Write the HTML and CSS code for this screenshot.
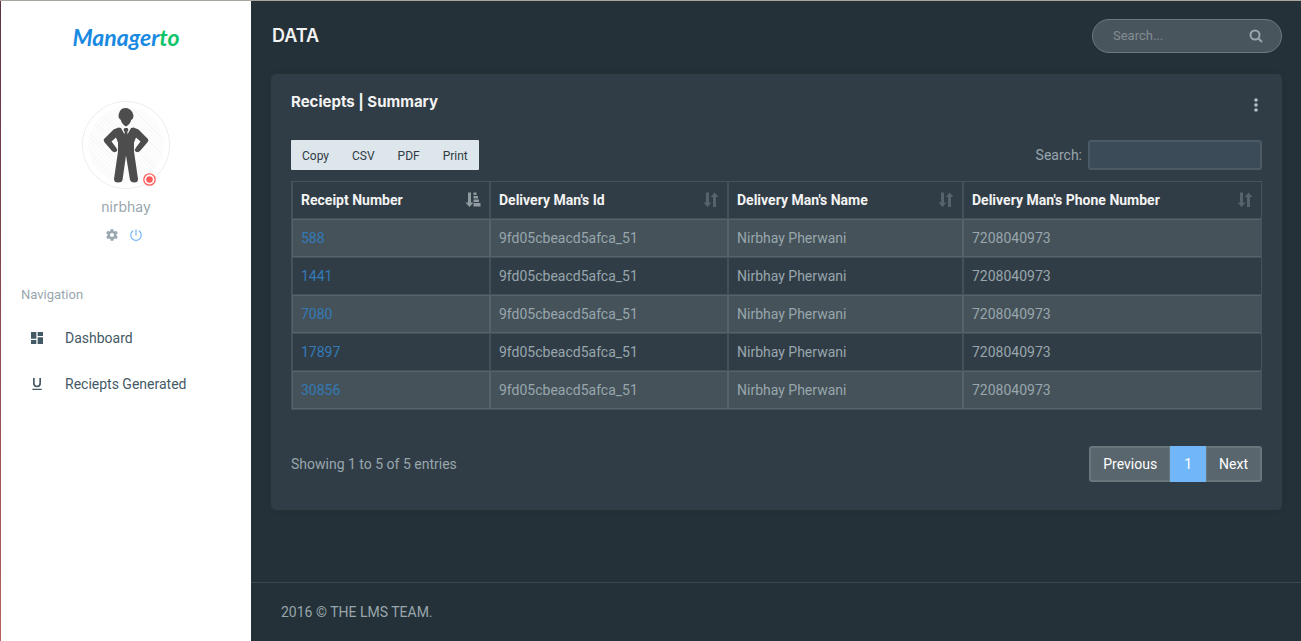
FILE: index.html
```html
<!DOCTYPE html>
<html lang="en">
<head>
<meta charset="utf-8">
<meta name="viewport" content="width=device-width, initial-scale=1">
<title>Managerto - Data</title>
<link rel="stylesheet" href="styles.css">
</head>
<body>
<svg class="sprite" aria-hidden="true">
  <symbol id="sort" viewBox="0 0 16 16">
    <path d="M3 0.500h3v10h2.500L4.500 15 .500 10.500H3zM10 15V5H7.800L11.500.500l4 4.500H13v10z"/>
  </symbol>
  <symbol id="sort-asc" viewBox="0 0 16 16">
    <path d="M3 0.500h3v10h2.500L4.500 15 .500 10.500H3zM8.500.500h3V3h-3zM8.500 4H13v2.500H8.500zM8.500 7.500h5.500V10H8.500zM8.500 11H15.500v3.500H8.500z"/>
  </symbol>
</svg>
<div class="page">
  <aside class="sidebar">
    <a class="logo" href="#">Manager<span class="logo-end">to</span></a>
    <section class="user">
      <div class="avatar">
        <svg class="man" viewBox="0 0 88 88" aria-hidden="true">
          <path d="M37.500 11q1.500-4 6-4t7 4.500l1 3-.5 3-1.800 1.500q-1 4-5.200 6.500-4.200-2.500-5.200-6.500L36.800 17l-.3-3z"/>
          <path d="M36.500 26.500 39 27l5 9 5-9 2.500-.5 5 2L66 38q.8 1.500-.3 3L58 50q-2 2-4.500.500-1.500-2 .5-4l4.500-6L54 36.500l-2 5v9L56 78q0 3.500-3.500 3.500T48 79l-4-24.500L40.500 79q-.5 2.500-4.500 2.500T32 78l4-27.500v-9l-2-5-4.500 4 4.500 6q2 2 .5 4-2.500 1.500-4.500-.5l-7.700-9q-1.100-1.500-.3-3l9.500-9.500z"/>
          <path d="m42.500 27h3l1 2-1.200 2 .7 4-2 3-2-3 .7-4-1.200-2z"/>
        </svg>
        <svg class="status" viewBox="0 0 13 13" aria-hidden="true"><circle class="ring" cx="6.500" cy="6.500" r="5.700"/><circle class="dot" cx="6.500" cy="6.500" r="3.300"/></svg>
      </div>
      <h2 class="user-name">nirbhay</h2>
      <div class="user-links">
        <a href="#" aria-label="Settings"><svg class="gear" viewBox="0 0 24 24"><path d="M19.400 13a8 8 0 0 0 0-2l2.100-1.700c.2-.1.300-.4.100-.6l-2-3.500c-.1-.2-.4-.3-.6-.2l-2.500 1a7 7 0 0 0-1.700-1l-.4-2.600a.5.5 0 0 0-.5-.4h-4c-.3 0-.5.200-.5.400L9 5a7 7 0 0 0-1.700 1L4.900 5c-.2-.1-.5 0-.6.200l-2 3.500c-.1.200-.1.500.1.600L4.600 11a8 8 0 0 0 0 2l-2.100 1.700c-.2.100-.3.400-.1.600l2 3.500c.1.200.4.300.6.200l2.500-1a7 7 0 0 0 1.700 1l.3 2.600c0 .2.200.4.500.4h4c.3 0 .5-.2.500-.4l.4-2.600a7 7 0 0 0 1.700-1l2.400 1c.2.1.5 0 .6-.2l2-3.500c.1-.2.100-.5-.1-.6zM12 15.500a3.500 3.500 0 1 1 0-7 3.500 3.500 0 0 1 0 7z"/></svg></a>
        <a href="#" aria-label="Log out"><svg class="power" viewBox="0 0 24 24"><path d="M12 3v9M17.500 5a9 9 0 1 1-11 0"/></svg></a>
      </div>
    </section>
    <nav class="nav">
      <p class="nav-title">Navigation</p>
      <a class="nav-link" href="#"><svg viewBox="0 0 24 24"><path d="M3 13h8V3H3zm0 8h8v-6H3zm10 0h8V11h-8zm0-18v6h8V3z"/></svg>Dashboard</a>
      <a class="nav-link" href="#"><svg viewBox="0 0 24 24"><path d="M12 17a6 6 0 0 0 6-6V3h-2.500v8a3.500 3.500 0 0 1-7 0V3H6v8a6 6 0 0 0 6 6zm-7 2v2h14v-2z"/></svg>Reciepts Generated</a>
    </nav>
  </aside>
  <div class="main">
    <header class="topbar">
      <h1 class="page-title">DATA</h1>
      <form class="site-search" role="search">
        <input type="text" placeholder="Search..." aria-label="Search site">
        <button type="button" aria-label="Search"><svg viewBox="0 0 14 14"><circle cx="6" cy="6" r="4.500"/><path d="m9.500 9.500 3.500 3.500"/></svg></button>
      </form>
    </header>
    <main class="card">
      <div class="card-head">
        <h2 class="card-title">Reciepts | Summary</h2>
        <button class="more" type="button" aria-label="More actions"><svg viewBox="0 0 4 14"><circle cx="2" cy="2" r="1.800"/><circle cx="2" cy="7" r="1.800"/><circle cx="2" cy="12" r="1.800"/></svg></button>
      </div>
      <div class="tools">
        <div class="exports">
          <button type="button">Copy</button><button type="button">CSV</button><button type="button">PDF</button><button type="button">Print</button>
        </div>
        <div class="filter"><label for="filter">Search:</label><input id="filter" type="text"></div>
      </div>
      <table class="data">
        <colgroup><col class="col-number"><col class="col-id"><col class="col-name"><col></colgroup>
        <thead>
          <tr>
            <th class="sorted"><div class="th-in">Receipt Number<svg><use href="#sort-asc"/></svg></div></th>
            <th><div class="th-in">Delivery Man's Id<svg><use href="#sort"/></svg></div></th>
            <th><div class="th-in">Delivery Man's Name<svg><use href="#sort"/></svg></div></th>
            <th><div class="th-in">Delivery Man's Phone Number<svg><use href="#sort"/></svg></div></th>
          </tr>
        </thead>
        <tbody>
          <tr><td><a href="#">588</a></td><td>9fd05cbeacd5afca_51</td><td>Nirbhay Pherwani</td><td>7208040973</td></tr>
          <tr><td><a href="#">1441</a></td><td>9fd05cbeacd5afca_51</td><td>Nirbhay Pherwani</td><td>7208040973</td></tr>
          <tr><td><a href="#">7080</a></td><td>9fd05cbeacd5afca_51</td><td>Nirbhay Pherwani</td><td>7208040973</td></tr>
          <tr><td><a href="#">17897</a></td><td>9fd05cbeacd5afca_51</td><td>Nirbhay Pherwani</td><td>7208040973</td></tr>
          <tr><td><a href="#">30856</a></td><td>9fd05cbeacd5afca_51</td><td>Nirbhay Pherwani</td><td>7208040973</td></tr>
        </tbody>
      </table>
      <div class="table-foot">
        <span>Showing 1 to 5 of 5 entries</span>
        <nav class="pages" aria-label="Pages"><a href="#">Previous</a><a class="current" href="#">1</a><a href="#">Next</a></nav>
      </div>
    </main>
    <footer class="footer">2016 © THE LMS TEAM.</footer>
  </div>
</div>
</body>
</html>
```
FILE: styles.css
```css
* { box-sizing: border-box; }

body {
  margin: 0;
  background: #253138;
  color: #98a6ad;
  font: 14px/20px Roboto, sans-serif;
}

h1, h2, p { margin: 0; }
a { color: inherit; text-decoration: none; }
button, input { font: inherit; color: inherit; }
button { padding: 0; border: 0; background: none; cursor: pointer; }
.sprite { display: none; }

.page {
  display: flex;
  min-height: 100vh;
  border-top: 1px solid #aaa59f;
}

/* Sidebar */
.sidebar {
  flex: none;
  width: 251px;
  border-left: 1px solid;
  border-image: linear-gradient(#5f3344, #b5605e) 1;
  background: #fff;
}

.logo {
  display: block;
  height: 72px;
  color: #188ae2;
  font: italic 700 23px/72px Lato, sans-serif;
  text-align: center;
}
.logo-end { color: #10c469; }

.user {
  display: flex;
  flex-direction: column;
  align-items: center;
  padding-top: 28px;
}
.avatar {
  position: relative;
  width: 88px;
  height: 88px;
  border: 1px solid #e6ebed;
  border-radius: 50%;
  padding: 5px;
  background: repeating-linear-gradient(45deg, #f8f8f8 0 1px, #fdfdfd 1px 3px) content-box;
}
.avatar::before {
  content: "";
  position: absolute;
  inset: 0;
  border: 5px solid #fff;
  border-radius: 50%;
}
.man {
  position: absolute;
  inset: -1px;
  width: 88px;
  height: 88px;
  fill: #4d4d4d;
}
.status {
  position: absolute;
  right: 13px;
  bottom: 2px;
  width: 13px;
  height: 13px;
}
.ring {
  fill: #fff;
  stroke: #ff5b5b;
  stroke-width: 1.300;
}
.dot { fill: #ff5b5b; }
.user-name {
  margin-top: 8px;
  font: 400 14px/20px Inter, sans-serif;
}
.user-links {
  display: flex;
  gap: 10px;
  margin-top: 11px;
  padding-right: 5px;
}
.user-links svg {
  display: block;
  width: 14px;
  height: 14px;
}
.gear { fill: #98a6ad; }
.power {
  fill: none;
  stroke: #71b6f9;
  stroke-width: 2;
  stroke-linecap: round;
}

.nav { padding-top: 43px; }
.nav-title {
  padding: 0 20px;
  margin-bottom: 10px;
  font-size: 13px;
}
.nav-link {
  display: flex;
  align-items: center;
  gap: 20px;
  padding: 13px 28px;
  color: #435966;
}
.nav-link svg {
  width: 16px;
  height: 16px;
  fill: #435966;
}

/* Content */
.main {
  flex: 1;
  min-width: 0;
  display: flex;
  flex-direction: column;
}
.topbar {
  display: flex;
  align-items: center;
  justify-content: space-between;
  height: 70px;
  padding: 0 19px 0 21px;
}
.page-title {
  color: #f3f3f3;
  font: 600 18px/20px Inter, sans-serif;
}
.site-search {
  display: flex;
  align-items: center;
  width: 190px;
  height: 34px;
  padding: 0 18px 0 20px;
  border: 1px solid #6b7980;
  border-radius: 17px;
  background: #49555c;
}
.site-search input {
  flex: 1;
  min-width: 0;
  padding: 0;
  border: 0;
  outline: 0;
  background: none;
  font-size: 13px;
}
.site-search input::placeholder { color: #818d93; }
.site-search svg {
  display: block;
  width: 14px;
  height: 14px;
  fill: none;
  stroke: #98a6ad;
  stroke-width: 2;
}

.card {
  margin: 3px 19px 20px 20px;
  padding: 18px 20px 28px;
  border-radius: 5px;
  background: #313d46;
  box-shadow: 0 0 8px rgba(0, 0, 0, .06);
}
.card-head {
  display: flex;
  align-items: flex-end;
  justify-content: space-between;
  padding-right: 4px;
}
.card-title {
  color: #f3f3f3;
  font: 700 15px/20px Inter, sans-serif;
}
.more svg {
  display: block;
  width: 4px;
  height: 14px;
  fill: #b4bfc4;
}
.tools {
  display: flex;
  align-items: center;
  justify-content: space-between;
  margin: 28px 0 11px;
}
.exports {
  display: flex;
  gap: 1px;
  height: 30px;
  border-radius: 1px;
  background: #dce6eb;
}
.exports button {
  padding: 1px 11px 0;
  color: #323a46;
  font-size: 12px;
}
.filter {
  display: flex;
  align-items: center;
  gap: 6px;
}
.filter input {
  width: 174px;
  height: 30px;
  padding: 4px 8px;
  border: 2px solid #4b5a64;
  border-radius: 3px;
  background: #3b4c58;
}

.data {
  width: 100%;
  border: 1px solid #46535a;
  border-spacing: 0;
  table-layout: fixed;
}
.col-number { width: 198px; }
.col-id { width: 238px; }
.col-name { width: 235px; }
.data th, .data td {
  padding: 8px;
  border: 1px solid rgba(255, 255, 255, .1);
  text-align: left;
}
.data th {
  border-top: 0;
  color: #f3f3f3;
  font-weight: 700;
}
.data th:last-child, .data td:last-child { border-right: 0; }
.data tbody tr:nth-child(odd) { background: #455259; }
.data a { color: #337ab7; }
.th-in {
  display: flex;
  align-items: center;
  justify-content: space-between;
}
.th-in svg {
  width: 16px;
  height: 16px;
  fill: #56636a;
}
.sorted svg { fill: #929b9f; }

.table-foot {
  display: flex;
  align-items: center;
  justify-content: space-between;
  margin-top: 36px;
}
.pages { display: flex; }
.pages a {
  padding: 6px 12px;
  border: 2px solid #69767c;
  background: #59666d;
  color: #fff;
}
.pages a + a { margin-left: -1px; }
.pages a:first-child { border-radius: 3px 0 0 3px; }
.pages a:last-child { border-radius: 0 3px 3px 0; }
.pages .current {
  z-index: 1;
  border-color: #71b6f9;
  background: #71b6f9;
}

.footer {
  margin-top: auto;
  padding: 19px 30px;
  border-top: 1px solid #3b474e;
}
```
